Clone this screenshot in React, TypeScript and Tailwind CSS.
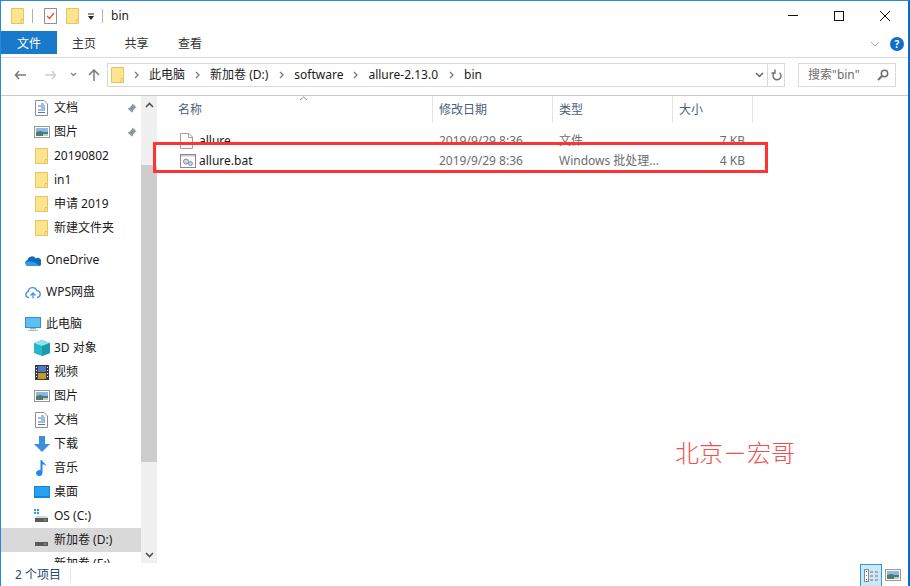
import { ReactNode } from "react";

const FONT = "font-['Noto_Sans','Noto_Sans_CJK_SC',sans-serif]";

function Folder({ className = "" }: { className?: string }) {
  return (
    <svg width="13" height="16" viewBox="0 0 13 16" className={className}>
      <path d="M.5.5h12v15H.5z" fill="#fde58f" stroke="#e8c45c" />
      <path d="M10 15.500v-4h2.500" fill="none" stroke="#e8c45c" />
    </svg>
  );
}

function Pin() {
  return (
    <svg width="11" height="11" viewBox="0 0 11 11">
      <path d="M6.500.5l4 4-1.200.6-2.300 2.300-.4 2-1.300-.4-2-2L1 10l2.200-3-1.600-1.800 2-.5L6 2z" fill="#8d96a0" />
    </svg>
  );
}

function DocIcon() {
  return (
    <svg width="13" height="16" viewBox="0 0 13 16">
      <path d="M.5.5h8.500l3.500 3.500v11.500H.5z" fill="#fff" stroke="#8f8f8f" />
      <path d="M6 4h3M3 6h7M6 8h4M3 10h7M3 12.500h7" stroke="#3f7fc4" />
    </svg>
  );
}

function PicIcon() {
  return (
    <svg width="16" height="12" viewBox="0 0 16 12">
      <rect x=".5" y=".5" width="15" height="11" fill="#fff" stroke="#999" />
      <rect x="2" y="2" width="12" height="4" fill="#8cb8e8" />
      <path d="M2 6l4-1 4 1 4 0v4H2z" fill="#4e7d6b" />
      <path d="M9 8h5v2H9z" fill="#b7cbd0" />
    </svg>
  );
}

function OneDriveIcon() {
  return (
    <svg width="16" height="11" viewBox="0 0 16 11">
      <path d="M3 11a3 3 0 0 1-.5-5.900 4.500 4.500 0 0 1 8.300-1.600A3.600 3.600 0 0 1 16 8a3 3 0 0 1-1 3z" fill="#0f6cbd" />
      <path d="M3 11a2.500 2.500 0 0 1-1-4.600L9 7l6 4z" fill="#2f9be8" />
    </svg>
  );
}

function WpsIcon() {
  return (
    <svg width="16" height="13" viewBox="0 0 16 13">
      <path d="M4 11.500H3.500a3 3 0 0 1-.3-5.900 4.500 4.500 0 0 1 8.700-1 3.500 3.500 0 0 1 .6 6.900H12" fill="none" stroke="#4b8ef0" strokeWidth="1.400" />
      <path d="M5.500 9.500L8 7l2.500 2.500M8 7.500v5" fill="none" stroke="#4b8ef0" strokeWidth="1.300" />
    </svg>
  );
}

function MonitorIcon() {
  return (
    <svg width="16" height="14" viewBox="0 0 16 14">
      <rect x=".5" y=".5" width="15" height="10" fill="#5cc0f5" stroke="#3a8fc9" />
      <path d="M5 11h6v1.500H5z" fill="#a9b4bd" />
      <path d="M3 13h10v1H3z" fill="#b5bdc4" />
    </svg>
  );
}

function CubeIcon() {
  return (
    <svg width="16" height="16" viewBox="0 0 16 16">
      <path d="M8 0l8 3v10l-8 3-8-3V3z" fill="#29b6c6" />
      <path d="M8 0l8 3-8 3-8-3z" fill="#8fe3ea" />
      <path d="M8 6l8-3v10l-8 3z" fill="#1c9bb0" />
    </svg>
  );
}

function VideoIcon() {
  return (
    <svg width="14" height="15" viewBox="0 0 14 15">
      <rect width="14" height="15" fill="#3c3c3c" />
      <rect x="3" y="1" width="8" height="6" fill="#4a78c8" />
      <rect x="3" y="8" width="8" height="6" fill="#c49a2e" />
      <path d="M1 2h1v1H1zM1 5h1v1H1zM1 8h1v1H1zM1 11h1v1H1zM12 2h1v1h-1zM12 5h1v1h-1zM12 8h1v1h-1zM12 11h1v1h-1z" fill="#fff" />
    </svg>
  );
}

function DownloadIcon() {
  return (
    <svg width="16" height="16" viewBox="0 0 16 16">
      <path d="M5 0h6v8h5l-8 8-8-8h5z" fill="#3d8fdc" />
    </svg>
  );
}

function MusicIcon() {
  return (
    <svg width="11" height="16" viewBox="0 0 11 16">
      <path d="M4.500 0h1.500c.3 2.500 4 3.500 4.500 6.500-1.200-1.500-2.700-2-4-2.200V13a3.200 3 0 1 1-2-2.700z" fill="#1f8ae6" />
    </svg>
  );
}

function DesktopIcon() {
  return (
    <svg width="16" height="12" viewBox="0 0 16 12">
      <rect width="16" height="12" fill="#0f86dc" />
      <rect x="1" y="1" width="14" height="9" fill="#27a0ef" />
    </svg>
  );
}

function DriveIcon({ win = false }: { win?: boolean }) {
  return (
    <svg width="15" height="14" viewBox="0 0 15 14">
      {win && <path d="M0 0h2v2H0zM3 0h2v2H3zM0 3h2v2H0zM3 3h2v2H3z" fill="#19a3e8" />}
      <path d="M1 9l1-2h11l1 2z" fill="#d6d6d6" />
      <rect x="1" y="9" width="13" height="4" fill="#5b5b5b" />
      <rect x="10" y="10.500" width="2" height="1" fill="#5fe05f" />
    </svg>
  );
}

function NavItem({ icon, label, indent = true, pin, selected }: { icon: ReactNode; label: string; indent?: boolean; pin?: boolean; selected?: boolean }) {
  return (
    <div className={`flex h-6 items-center ${selected ? "bg-[#d9d9d9]" : ""} ${indent ? "pl-8" : "pl-6"}`}>
      <span className={`flex shrink-0 justify-center ${indent ? "-ml-[1px] w-[21px] pr-[2px]" : "mr-1 w-[16px]"}`}>{icon}</span>
      <span className="ml-[1px] whitespace-nowrap text-[12px] text-[#1a1a1a]">{label}</span>
      {pin && <span className="ml-auto mr-[4px] flex"><Pin /></span>}
    </div>
  );
}

function Sidebar() {
  return (
    <div className="h-full w-[140px] shrink-0 overflow-hidden">
      <NavItem icon={<DocIcon />} label="文档" pin />
      <NavItem icon={<PicIcon />} label="图片" pin />
      <NavItem icon={<Folder />} label="20190802" />
      <NavItem icon={<Folder />} label="in1" />
      <NavItem icon={<Folder />} label="申请 2019" />
      <NavItem icon={<Folder />} label="新建文件夹" />
      <div className="h-2" />
      <NavItem icon={<OneDriveIcon />} label="OneDrive" indent={false} />
      <div className="h-2" />
      <NavItem icon={<WpsIcon />} label="WPS网盘" indent={false} />
      <div className="h-2" />
      <NavItem icon={<MonitorIcon />} label="此电脑" indent={false} />
      <NavItem icon={<CubeIcon />} label="3D 对象" />
      <NavItem icon={<VideoIcon />} label="视频" />
      <NavItem icon={<PicIcon />} label="图片" />
      <NavItem icon={<DocIcon />} label="文档" />
      <NavItem icon={<DownloadIcon />} label="下载" />
      <NavItem icon={<MusicIcon />} label="音乐" />
      <NavItem icon={<DesktopIcon />} label="桌面" />
      <NavItem icon={<DriveIcon win />} label="OS (C:)" />
      <NavItem icon={<DriveIcon />} label="新加卷 (D:)" selected />
      <NavItem icon={<DriveIcon />} label="新加卷 (E:)" />
    </div>
  );
}

function Scrollbar() {
  return (
    <div className="flex h-full w-[16px] shrink-0 flex-col bg-[#f0f0f0]">
      <div className="flex h-[17px] items-center justify-center">
        <svg width="9" height="6" viewBox="0 0 9 6"><path d="M1 5l3.500-3.500L8 5" fill="none" stroke="#505050" strokeWidth="1.600" /></svg>
      </div>
      <div className="mt-[52px] h-[297px] bg-[#cdcdcd]" />
      <div className="flex-1" />
      <div className="flex h-[17px] items-center justify-center">
        <svg width="9" height="6" viewBox="0 0 9 6"><path d="M1 1l3.500 3.500L8 1" fill="none" stroke="#505050" strokeWidth="1.600" /></svg>
      </div>
    </div>
  );
}

function Chevron() {
  return (
    <svg width="5" height="8" viewBox="0 0 5 8" className="shrink-0">
      <path d="M1 1l3 3-3 3" fill="none" stroke="#7a7a7a" strokeWidth="1.300" />
    </svg>
  );
}

function HeaderCell({ label, className }: { label: string; className: string }) {
  return (
    <div className={`flex h-[27px] items-center border-r border-[#e5e5e5] pl-[6px] text-[12px] text-[#4c607a] ${className}`}>{label}</div>
  );
}

function FileRow({ icon, name, type, size }: { icon: ReactNode; name: string; type: string; size: string }) {
  return (
    <div className="flex h-5 items-center text-[12px] text-[#6d6d6d]">
      <div className="flex w-[274px] items-center pl-[21px]">
        <span className="flex w-[19px] shrink-0">{icon}</span>
        <span className="text-[#1a1a1a]">{name}</span>
      </div>
      <div className="w-[120px] pl-[6px]">2019/9/29 8:36</div>
      <div className="w-[120px] pl-[6px]">{type}</div>
      <div className="w-[78px] pr-[6px] text-right">{size}</div>
    </div>
  );
}

function PlainFileIcon() {
  return (
    <svg width="13" height="16" viewBox="0 0 13 16">
      <path d="M.5.5h8.500l3.500 3.500v11.500H.5z" fill="#fff" stroke="#a0a0a0" />
      <path d="M8.500.5v4h4" fill="none" stroke="#a0a0a0" />
    </svg>
  );
}

function BatIcon() {
  return (
    <svg width="16" height="14" viewBox="0 0 16 14">
      <rect x=".5" y=".5" width="15" height="13" fill="#fff" stroke="#8b8b8b" />
      <path d="M1 1h14v1.500H1z" fill="#c9c9c9" />
      <circle cx="6" cy="7.500" r="2.500" fill="#d8d8d8" stroke="#8b8b8b" />
      <circle cx="10.500" cy="9.500" r="2" fill="#a9d3f2" stroke="#6fa3cf" />
    </svg>
  );
}

export default function App() {
  return (
    <div className={`relative flex h-[586px] w-[910px] flex-col overflow-hidden border-t border-r-2 border-l border-t-[#2b88d8] border-r-[#0a6ebd] border-l-[#2b88d8] bg-white ${FONT}`}>
      {/* title bar */}
      <div className="flex h-[30px] shrink-0 items-center">
        <Folder className="ml-[10px]" />
        <div className="ml-[8px] h-3.5 w-px bg-[#b0b0b0]" />
        <svg width="13" height="16" viewBox="0 0 13 16" className="ml-[11px]">
          <path d="M.5.5h12v15H.5z" fill="#fff" stroke="#8f8f8f" />
          <path d="M3 8l2.500 2.500L10 5" fill="none" stroke="#e0552b" strokeWidth="1.300" />
        </svg>
        <Folder className="ml-[9px]" />
        <svg width="8" height="8" viewBox="0 0 8 8" className="ml-[8px] mt-[2px]">
          <path d="M1 1h6" stroke="#222" />
          <path d="M1 3h6L4 7z" fill="#222" />
        </svg>
        <div className="ml-[7px] h-3.5 w-px bg-[#b0b0b0]" />
        <span className="ml-[8px] text-[12px] text-[#222]">bin</span>
        <div className="ml-auto flex items-center">
          <svg width="46" height="14" viewBox="0 0 46 14"><path d="M18 6.500h10" stroke="#111" /></svg>
          <svg width="46" height="14" viewBox="0 0 46 14"><rect x="18.500" y="2.500" width="9" height="9" fill="none" stroke="#111" /></svg>
          <svg width="46" height="14" viewBox="0 0 46 14"><path d="M18 2l10 10M28 2L18 12" stroke="#111" /></svg>
        </div>
      </div>
      {/* ribbon tabs */}
      <div className="flex h-[27px] shrink-0 items-start border-b border-[#dadada]">
        <div className="flex h-[23px] w-[56px] items-center justify-center bg-[#1979ca] pt-[2px] text-[12px] text-white">文件</div>
        <div className="flex h-[23px] w-[54px] items-center justify-center pt-[2px] text-[12px] text-[#333]">主页</div>
        <div className="flex h-[23px] w-[51px] items-center justify-center pt-[2px] text-[12px] text-[#333]">共享</div>
        <div className="flex h-[23px] w-[56px] items-center justify-center pt-[2px] text-[12px] text-[#333]">查看</div>
        <div className="ml-auto flex h-[25px] items-center">
          <svg width="10" height="6" viewBox="0 0 10 6" className="mr-[10px]"><path d="M1 1l4 4 4-4" fill="none" stroke="#a8a8a8" /></svg>
          <div className="mr-[4px] flex h-[14px] w-[14px] items-center justify-center rounded-full bg-[#0f6fc6] text-[10px] font-bold leading-none text-white">?</div>
        </div>
      </div>
      {/* address bar */}
      <div className="flex h-[38px] shrink-0 items-center border-b border-[#c9c9c9] pb-[4px]">
        <svg width="13" height="10" viewBox="0 0 13 10" className="ml-[13px]"><path d="M5 1L1.500 5 5 9M2 5h10" fill="none" stroke="#7a7a7a" strokeWidth="1.500" /></svg>
        <svg width="13" height="10" viewBox="0 0 13 10" className="ml-[17px]"><path d="M8 1l3.500 4L8 9M11 5H1" fill="none" stroke="#cfcfcf" strokeWidth="1.500" /></svg>
        <svg width="7" height="5" viewBox="0 0 7 5" className="ml-[13px]"><path d="M1 1l2.500 2.500L6 1" fill="none" stroke="#8a8a8a" strokeWidth="1.300" /></svg>
        <svg width="12" height="12" viewBox="0 0 12 12" className="ml-[11px]"><path d="M1 6l5-5 5 5M6 1.500V12" fill="none" stroke="#7a7a7a" strokeWidth="1.500" /></svg>
        <div className="ml-[7px] flex h-[24px] w-[678px] items-center border border-[#d9d9d9] text-[12px] text-[#1a1a1a]">
          <Folder className="ml-[3px]" />
          <span className="ml-[10px]"><Chevron /></span>
          <span className="ml-[10px]">此电脑</span>
          <span className="ml-[10px]"><Chevron /></span>
          <span className="ml-[10px]">新加卷 (D:)</span>
          <span className="ml-[11px]"><Chevron /></span>
          <span className="ml-[10px]">software</span>
          <span className="ml-[10px]"><Chevron /></span>
          <span className="ml-[10px]">allure-2.13.0</span>
          <span className="ml-[11px]"><Chevron /></span>
          <span className="ml-[10px]">bin</span>
          <div className="ml-auto flex h-full items-center">
            <svg width="9" height="6" viewBox="0 0 9 6" className="mr-[3px]"><path d="M1 1l3.500 3.500L8 1" fill="none" stroke="#666" strokeWidth="1.500" /></svg>
            <div className="flex h-full w-[17px] items-center justify-center border-l border-[#d9d9d9]">
              <svg width="11" height="12" viewBox="0 0 11 12"><path d="M8 3.200A4 4 0 1 1 3 3.200M3.500 0v3.500H0" fill="none" stroke="#707070" strokeWidth="1.400" transform="translate(.5 .5)" /></svg>
            </div>
          </div>
        </div>
        <div className="ml-[13px] flex h-[24px] w-[98px] items-center border border-[#d9d9d9] pl-[9px] text-[12px] text-[#6d6d6d]">
          <span>搜索"bin"</span>
          <svg width="12" height="12" viewBox="0 0 12 12" className="ml-auto mr-[6px]"><circle cx="7.500" cy="4.500" r="3.200" fill="none" stroke="#707070" strokeWidth="1.500" /><path d="M5 7l-4 4" stroke="#707070" strokeWidth="2" /></svg>
        </div>
      </div>
      {/* body */}
      <div className="flex min-h-0 flex-1">
        <Sidebar />
        <Scrollbar />
        <div className="min-w-0 flex-1 pl-[2px]">
          <div className="relative flex">
            <svg width="9" height="5" viewBox="0 0 9 5" className="absolute left-[140px] top-0"><path d="M1 4l3.500-3L8 4" fill="none" stroke="#8a8a8a" /></svg>
            <HeaderCell label="名称" className="w-[274px] pl-[19px]" />
            <HeaderCell label="修改日期" className="w-[120px]" />
            <HeaderCell label="类型" className="w-[120px]" />
            <HeaderCell label="大小" className="w-[80px]" />
          </div>
          <div className="pt-[8px]">
            <FileRow icon={<PlainFileIcon />} name="allure" type="文件" size="7 KB" />
            <FileRow icon={<BatIcon />} name="allure.bat" type="Windows 批处理..." size="4 KB" />
          </div>
        </div>
      </div>
      {/* status bar */}
      <div className="flex h-[23px] shrink-0 items-center bg-white pt-[1px]">
        <span className="ml-[14px] text-[12px] text-[#2a4a72]">2 个项目</span>
        <div className="ml-[9px] h-[14px] w-px bg-[#e5e5e5]" />
        <div className="ml-auto mr-[7px] flex items-center">
          <div className="flex h-[23px] w-[22px] items-center justify-center border border-[#2d9bdc] bg-[#cce8f7]">
            <svg width="14" height="13" viewBox="0 0 14 13">
              <rect x=".5" y=".5" width="4" height="12" fill="#fff" stroke="#8a8a8a" />
              <path d="M2 2h1v1H2z" fill="#555" /><path d="M2 6h1v1H2z" fill="#3a9ad9" /><path d="M2 10h1v1H2z" fill="#c0392b" />
              <path d="M6 3h3M11 3h3M6 7h3M11 7h3M6 11h3M11 11h3" stroke="#707070" />
            </svg>
          </div>
          <span className="ml-[3px] flex"><PicIcon /></span>
        </div>
      </div>
      {/* annotations on the screenshot */}
      <div className="absolute left-[152px] top-[141px] h-[31px] w-[615px] border-[3px] border-[#ff3333]" />
      <div className="absolute left-[674px] top-[434px] text-[24px] leading-[34px] font-light whitespace-nowrap text-[#f25050] font-['Noto_Sans_CJK_SC',sans-serif]">北京－宏哥</div>
    </div>
  );
}
